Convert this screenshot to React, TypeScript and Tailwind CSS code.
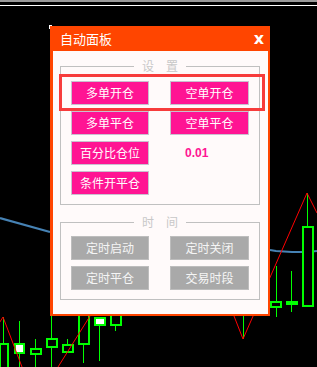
import React from "react";

const cjk = { fontFamily: '"Noto Sans CJK SC", "Noto Sans", sans-serif' };

type Candle = { x1: number; x2: number; y1: number; y2: number; wx: number; wt: number; wb: number; fill?: boolean };

const candles: Candle[] = [
  { x1: -1, x2: 8, y1: 343, y2: 370, wx: 3, wt: 317, wb: 343 },
  { x1: 14, x2: 24, y1: 343, y2: 353, wx: 19, wt: 321, wb: 367, fill: true },
  { x1: 30, x2: 41, y1: 348, y2: 354, wx: 35, wt: 339, wb: 367 },
  { x1: 46, x2: 57, y1: 338, y2: 347, wx: 51, wt: 316, wb: 367 },
  { x1: 62, x2: 73, y1: 344, y2: 352, wx: 67, wt: 339, wb: 344 },
  { x1: 78, x2: 89, y1: 310, y2: 344, wx: 83, wt: 344, wb: 363 },
  { x1: 94, x2: 105, y1: 317, y2: 325, wx: 99, wt: 325, wb: 361, fill: true },
  { x1: 110, x2: 121, y1: 310, y2: 325, wx: 115, wt: 325, wb: 331 },
  { x1: 270, x2: 281, y1: 301, y2: 307, wx: 276, wt: 266, wb: 317 },
  { x1: 286, x2: 297, y1: 301, y2: 304, wx: 291, wt: 271, wb: 312, fill: true },
  { x1: 302, x2: 313, y1: 226, y2: 306, wx: 307, wt: 193, wb: 307 },
];

function Chart() {
  return (
    <svg className="absolute inset-0" width={317} height={367} shapeRendering="crispEdges">
      <rect x={0} y={0} width={317} height={2} fill="#9a9a9a" />
      <rect x={0} y={5} width={317} height={1} fill="#ffffff" />
      <g shapeRendering="auto" stroke="#4682b4" strokeWidth={2.2} fill="none">
        <polyline points="0,218 50,232" />
        <polyline points="270,250 276,251 292,252 307,252 317,251" />
      </g>
      {candles.map((c, i) => (
        <g key={i}>
          <line x1={c.wx + 0.5} y1={c.wt} x2={c.wx + 0.5} y2={c.wb} stroke="#00ff00" strokeWidth={1} />
          <rect
            x={c.x1 + 0.5}
            y={c.y1 + 0.5}
            width={c.x2 - c.x1 - 1}
            height={c.y2 - c.y1 - 1}
            fill={c.fill ? "#ffffff" : "#000000"}
            stroke="#00ff00"
            strokeWidth={2}
          />
        </g>
      ))}
      <line x1={243.5} y1={316} x2={243.5} y2={339} stroke="#00ff00" strokeWidth={1} />
      <g shapeRendering="auto" stroke="#ff0000" strokeWidth={1} fill="none">
        <polyline points="-2,325 3,317 22,367" />
        <polyline points="58,367 90,316" />
        <polyline points="234,316 243,339 307,193 317,213" />
      </g>
    </svg>
  );
}

function Btn({ label, grey }: { label: string; grey?: boolean }) {
  return (
    <div
      className={
        grey
          ? "flex h-6 items-center justify-center border border-[#bdbdbd] bg-[#a9a9a9] text-[12px] text-[#f5f5f5]"
          : "flex h-6 items-center justify-center border border-[#c9c0cf] bg-[#ff1493] text-[12px] text-white"
      }
    >
      {label}
    </div>
  );
}

function Group({ title, children, top }: { title: string; children: React.ReactNode; top: string }) {
  return (
    <fieldset className={`w-[200px] border border-[#c0c0c0] px-[10px] pb-[9px] ${top}`}>
      <legend className="mx-auto px-2 text-[12px] leading-4 text-[#c8c8c8]">{title}</legend>
      <div className="grid grid-cols-[78px_79px] gap-x-[21px] gap-y-[6px]">{children}</div>
    </fieldset>
  );
}

export default function App() {
  return (
    <div className="relative h-[367px] w-[317px] overflow-hidden bg-black" style={cjk}>
      <Chart />

      <div className="absolute left-[49px] top-[25px] h-[4px] w-[3px] border-l border-t border-white" />

      <div className="absolute left-[50px] top-[26px] flex h-[290px] w-[220px] flex-col bg-[#ff4500]">
        <div className="flex h-[25px] items-center justify-between pl-[10px] pr-[6px]">
          <span className="text-[13px] text-white">自动面板</span>
          <span
            className="text-[16px] font-bold leading-none text-white"
            style={{ fontFamily: '"DejaVu Sans", sans-serif' }}
          >
            x
          </span>
        </div>

        <div className="mb-[2px] ml-[3px] mr-[2px] flex-1 bg-[#fffafa] pl-[7px] pt-[7px]">
          <Group title="设　置" top="pt-[7px]">
            <Btn label="多单开仓" />
            <Btn label="空单开仓" />
            <Btn label="多单平仓" />
            <Btn label="空单平仓" />
            <Btn label="百分比仓位" />
            <div
              className="flex items-center pl-[15px] text-[12px] font-bold text-[#ff1493]"
              style={{ fontFamily: '"Liberation Sans", Arial, sans-serif' }}
            >
              0.01
            </div>
            <Btn label="条件开平仓" />
          </Group>

          <Group title="时　间" top="mt-[9px] pt-[6px]">
            <Btn label="定时启动" grey />
            <Btn label="定时关闭" grey />
            <Btn label="定时平仓" grey />
            <Btn label="交易时段" grey />
          </Group>
        </div>
      </div>

      <div className="absolute left-[59px] top-[74px] h-[37px] w-[206px] border-[3px] border-[#f73b3b]" />
    </div>
  );
}
